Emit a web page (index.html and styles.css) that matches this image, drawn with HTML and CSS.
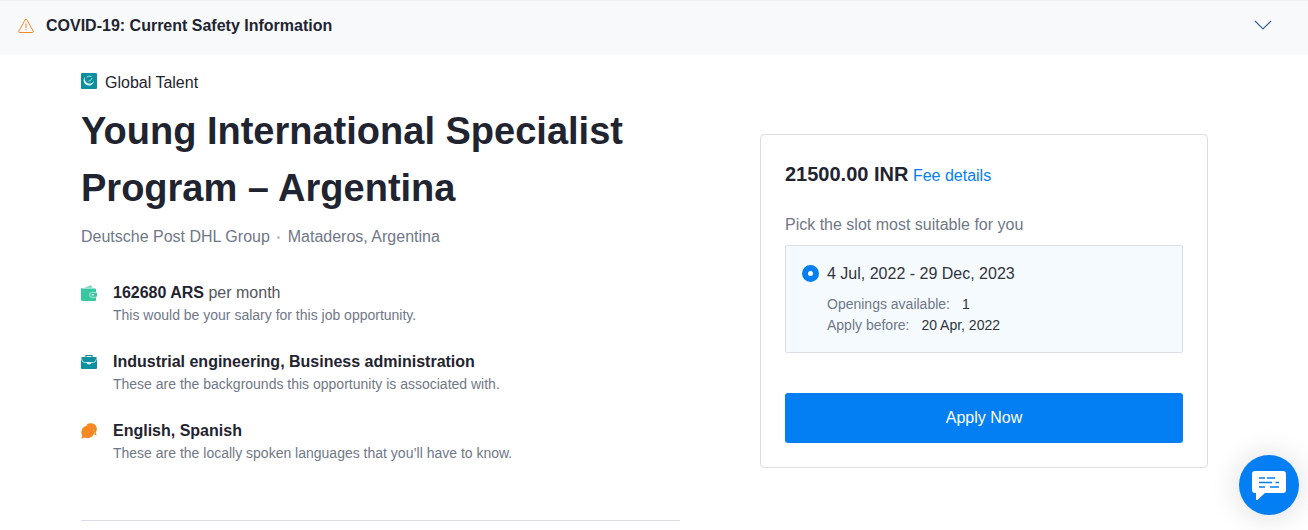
FILE: index.html
```html
<!DOCTYPE html>
<html lang="en">
<head>
    <meta charset="UTF-8">
    <meta name="viewport" content="width=device-width, initial-scale=1.0">
    <title>Young International Specialist Program – Argentina</title>
    <link rel="stylesheet" href="styles.css">
</head>
<body>

<button class="notice" type="button" aria-expanded="false">
    <svg class="notice-icon" viewBox="0 0 16 16" fill="none" stroke="#f48924" stroke-linecap="round" stroke-linejoin="round">
        <path d="M7.2 1.7 0.8 13.2Q0.2 14.5 1.6 14.5H14.4Q15.8 14.5 15.2 13.2L8.8 1.7Q8 0.5 7.2 1.7Z"/>
        <path d="M8 6V9.800M8 11.500V12"/>
    </svg>
    <span class="notice-text">COVID-19: Current Safety Information</span>
    <svg class="notice-arrow" viewBox="0 0 18 18" fill="none" stroke="#3b66a5" stroke-width="1.200">
        <path d="M1 4 9 12 17 4"/>
    </svg>
</button>

<main class="container">
    <section class="details">
        <div class="product">
            <svg class="icon" viewBox="0 0 16 16">
                <rect width="16" height="16" rx="1" fill="#0c8f9f"/>
                <path d="M4.200 3.600A5.200 5.200 0 1 0 13 7.500 4.600 4.600 0 0 1 5.600 9.400 4.600 4.600 0 0 1 4.200 3.600Z" fill="#e4f4f5"/>
                <path d="M5.600 4.300A4.500 4.500 0 0 1 10.500 3.500M7.500 8.300Q10.300 8 11 5" fill="none" stroke="#a5d8dd"/>
            </svg>
            <span>Global Talent</span>
        </div>
        <h1>Young International Specialist Program – Argentina</h1>
        <p class="company">Deutsche Post DHL Group <span class="dot"></span> Mataderos, Argentina</p>

        <ul class="features">
            <li>
                <svg class="icon" viewBox="0 0 16 16">
                    <path d="M3 2.800 10 0.200 11.500 2.800Z" fill="#6fd6b8"/>
                    <path d="M0 2.500Q0.500 3.500 2 3.500H14Q15 3.500 15 4.500V7H10.500Q8.200 7 8.200 9.800T10.500 12.500H15V15Q15 16 14 16H1.500Q0 16 0 14.500Z" fill="#37c8a0"/>
                    <path d="M8.200 7H15V12.500H8.200Z" fill="#37c8a0"/>
                    <path d="M16 7.500H10.500Q8.700 7.500 8.700 9.800T10.500 12H16" fill="none" stroke="#b9ebdc" stroke-width="0.800"/>
                    <path d="M10.500 8H16V11.500H10.500Z" fill="#37c8a0"/>
                    <rect x="10.500" y="9" width="2.500" height="1.500" rx="0.500" fill="#c9f0e5"/>
                </svg>
                <div>
                    <h2>162680 ARS <span>per month</span></h2>
                    <p>This would be your salary for this job opportunity.</p>
                </div>
            </li>
            <li>
                <svg class="icon" viewBox="0 0 16 16">
                    <path d="M5 3V1.500H11V3" fill="none" stroke="#0c8f9f" stroke-width="1.200"/>
                    <path d="M0.500 3H15.500L16 6V14Q16 15 15 15H1Q0 15 0 14V6Z" fill="#0c8f9f"/>
                    <path d="M0.500 4.500Q1 8.500 3.500 8.500H12.500Q15 8.500 15.500 4.500" fill="none" stroke="#b5dde1"/>
                    <path d="M5.500 8H10.500Q10.500 10.500 8 10.500T5.500 8Z" fill="#d8eff1"/>
                </svg>
                <div>
                    <h2>Industrial engineering, Business administration</h2>
                    <p>These are the backgrounds this opportunity is associated with.</p>
                </div>
            </li>
            <li>
                <svg class="icon" viewBox="0 0 16 16" fill="#f48924">
                    <path d="M5 2.200C8-0.800 14.500-0.200 15.700 4.500Q16.300 7.500 14.700 9.500L15.700 12.500 13.500 12C14 7 10.500 3 5 2.200Z"/>
                    <path d="M0.300 15.800 1.200 12.800C-1 8.500 1.500 2.800 6.500 2.800 11 2.800 13.800 7 12.900 10.800 11.600 14.800 7 16 3.800 14.600Z"/>
                </svg>
                <div>
                    <h2>English, Spanish</h2>
                    <p>These are the locally spoken languages that you’ll have to know.</p>
                </div>
            </li>
        </ul>
    </section>

    <aside class="card">
        <div class="price">
            <strong>21500.00 INR</strong>
            <a href="#">Fee details</a>
        </div>
        <p class="pick">Pick the slot most suitable for you</p>
        <label class="slot" for="slot1">
            <input type="radio" id="slot1" name="slot" checked>
            <span class="slot-info">
                <span class="slot-date">4 Jul, 2022 - 29 Dec, 2023</span>
                <span class="slot-row">Openings available: <b>1</b></span>
                <span class="slot-row">Apply before: <b>20 Apr, 2022</b></span>
            </span>
        </label>
        <button class="apply" type="button">Apply Now</button>
    </aside>
</main>

<!-- Floating chat launcher -->
<button class="chat" type="button" aria-label="Open chat">
    <svg viewBox="0 0 34 30">
        <path d="M3 1H31Q34 1 34 4V20Q34 23 31 23H13L6 29.500Q4 31 4 29V23H3Q0 23 0 20V4Q0 1 3 1Z" fill="#fff"/>
        <path d="M7 8H13M15 8H23M7 12.500H20M23.500 12.500H27M7 17H13M18 17H27" fill="none" stroke="#037ef3" stroke-width="1.500"/>
    </svg>
</button>

</body>
</html>
```
FILE: styles.css
```css
* {
    box-sizing: border-box;
}

body {
    margin: 0;
    font-family: "Liberation Sans", Arial, sans-serif;
    font-size: 16px;
    line-height: 24px;
    color: #1f2430;
    background-color: #fff;
}

h1, h2, p, ul {
    margin: 0;
    padding: 0;
}

button {
    font-family: inherit;
    border: none;
    cursor: pointer;
}

.notice {
    display: flex;
    align-items: center;
    width: 100%;
    padding: 13px 36px 17px 18px;
    border-top: 1px solid #eff1f4;
    background-color: #f7f9fb;
    color: #1f2430;
    font-size: 16px;
    font-weight: bold;
    line-height: 24px;
    text-align: left;
}

.notice-icon {
    width: 16px;
    height: 16px;
    margin-right: 12px;
}

.notice-text {
    flex: 1;
}

.notice-arrow {
    width: 18px;
    height: 18px;
}

.container {
    display: grid;
    grid-template-columns: minmax(0, 1fr) 448px;
    column-gap: 80px;
    align-items: start;
    padding: 16px 100px 0 81px;
}

.icon {
    flex: none;
    width: 16px;
    height: 16px;
}

.details {
    padding-bottom: 56px;
    border-bottom: 1px solid #dcdee1;
}

.product {
    display: flex;
    gap: 8px;
}

.product .icon {
    margin-top: 2px;
}

h1 {
    margin: 8px 0;
    font-size: 38px;
    line-height: 57px;
}

.company {
    color: #6f7887;
}

.dot {
    display: inline-block;
    width: 3px;
    height: 3px;
    margin: 0 3px;
    border-radius: 50%;
    background-color: #c0c4cb;
    vertical-align: middle;
}

.features {
    margin-top: 32px;
    list-style: none;
}

.features li {
    display: flex;
    gap: 16px;
    margin-bottom: 24px;
}

.features li:last-child {
    margin-bottom: 0;
}

.features .icon {
    margin-top: 4px;
}

.features h2 {
    font-size: 16px;
    line-height: 24px;
}

.features h2 span {
    color: #52565e;
    font-weight: normal;
}

.features p {
    color: #6f7887;
    font-size: 14px;
    line-height: 21px;
}

.card {
    margin-top: 63px;
    padding: 24px;
    border: 1px solid #dcdee1;
    border-radius: 4px;
}

.price strong {
    font-size: 20px;
    line-height: 30px;
}

.price a {
    color: #037ef3;
    text-decoration: none;
}

.pick {
    margin: 24px 0 8px;
    color: #6f7887;
}

.slot {
    display: flex;
    gap: 8px;
    padding: 16px;
    border: 1px solid #dcdee1;
    border-radius: 2px;
    background-color: #f5faff;
    cursor: pointer;
}

.slot input {
    appearance: none;
    flex: none;
    width: 17px;
    height: 17px;
    margin: 3px 0 0;
    border: 6px solid #037ef3;
    border-radius: 50%;
    background-color: #fff;
}

.slot-info {
    display: flex;
    flex-direction: column;
}

.slot-date {
    margin-bottom: 8px;
    color: #30343b;
}

.slot-row {
    color: #6f7887;
    font-size: 14px;
    line-height: 21px;
}

.slot-row b {
    margin-left: 8px;
    color: #30343b;
    font-weight: normal;
}

.apply {
    width: 100%;
    height: 50px;
    margin-top: 40px;
    border-radius: 3px;
    background-color: #037ef3;
    color: #fff;
    font-size: 16px;
}

.chat {
    position: fixed;
    right: 9px;
    bottom: 15px;
    display: flex;
    align-items: center;
    justify-content: center;
    width: 60px;
    height: 60px;
    padding: 0;
    border-radius: 50%;
    background-color: #037ef3;
    box-shadow: 0 1px 30px rgba(0, 0, 0, 0.15);
}

.chat svg {
    width: 34px;
    height: 30px;
}
```
